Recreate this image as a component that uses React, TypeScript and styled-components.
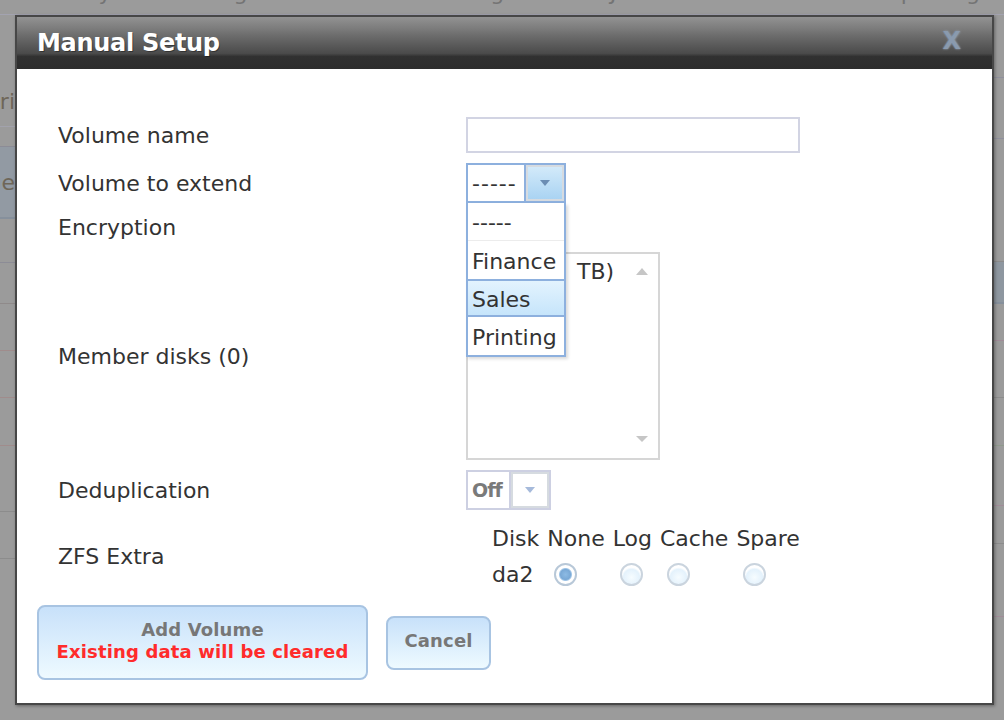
import styled, { createGlobalStyle } from "styled-components";

const GlobalStyle = createGlobalStyle`
  html, body {
    margin: 0;
    padding: 0;
    overflow: hidden;
  }
  body {
    background: #9b9b9b;
    font-family: "DejaVu Sans", Verdana, sans-serif;
  }
`;

const navItems = ["Directory", "Sharing", "Services", "Plugins", "Jails", "VMs", "Reporting"];

const App = () => {
  return (
    <>
      <GlobalStyle />
      <Page>
        <Nav>
          {navItems.map((n) => (
            <NavItem key={n}>{n}</NavItem>
          ))}
        </Nav>
        <Backdrop>
          <Stub>
            <StubRow $h={60} />
            <StubRow $h={50} $line="#a2a2ac">
              <StubText>Periodic Snapshot Tasks Stri</StubText>
            </StubRow>
            <StubRow $h={19} $line="#8c8c96" />
            <StubBox>
              <StubText>Volume Manage</StubText>
            </StubBox>
            <StubRow $h={43} $line="#8c8c96" />
            <StubRow $h={40} $line="#8f8a8a" />
            <StubRow $h={46} $line="#a08c8c" />
            <StubRow $h={46} $line="#a08c8c" />
            <StubRow $h={47} $line="#a08c8c" />
            <StubRow $h={65} $line="#8c8c8c" />
            <StubRow $h={46} $line="#8c8c8c" />
          </Stub>
          <Stub>
            <StubRow $h={62} $line="#8f8f9c" />
            <StubRow $h={60} $line="#8f8f9c" />
            <StubRow $h={122} $line="#8c8c8c" />
            <StubBox $tint="#8e97a0" $h={40} />
            <StubRow $h={36} $line="#a08c98" />
            <StubRow $h={56} $line="#8c8c8c" />
            <StubRow $h={47} $line="#8f9a8c" />
            <StubRow $h={59} $line="#a08c98" />
            <StubRow $h={37} $line="#8c8c8c" />
            <StubRow $h={72} $line="#a08c98" />
          </Stub>
        </Backdrop>

        <Modal>
          <TitleBar>
            <Title>Manual Setup</Title>
            <Close>X</Close>
          </TitleBar>
          <Body>
            <FormGrid>
              <Label>Volume name</Label>
              <TextInput type="text" />

              <Label>Volume to extend</Label>
              <SelectWrap>
                <Select $focused>
                  <SelectValue>-----</SelectValue>
                  <SelectButton $focused>
                    <Arrow $color="#6b8db3" />
                  </SelectButton>
                </Select>
                <Menu>
                  <MenuItem $sep>-----</MenuItem>
                  <MenuItem>Finance</MenuItem>
                  <MenuItem $active>Sales</MenuItem>
                  <MenuItem>Printing</MenuItem>
                </Menu>
              </SelectWrap>

              <Label>Encryption</Label>
              <EmptyCell />

              <Label>Member disks (0)</Label>
              <ListBox>
                <ListItems>
                  <ListItem>da2 (2.0{"\u2002"}TB)</ListItem>
                </ListItems>
                <ScrollCol>
                  <Arrow $color="#c6c6c6" $up $w={13} />
                  <Arrow $color="#c6c6c6" $w={13} />
                </ScrollCol>
              </ListBox>

              <Label>Deduplication</Label>
              <Select $narrow>
                <SelectValue $muted>Off</SelectValue>
                <SelectButton>
                  <Arrow $color="#a6badb" />
                </SelectButton>
              </Select>

              <Label>ZFS Extra</Label>
              <ExtraTable>
                <ExtraHead>Disk</ExtraHead>
                <ExtraHead>None</ExtraHead>
                <ExtraHead>Log</ExtraHead>
                <ExtraHead>Cache</ExtraHead>
                <ExtraHead>Spare</ExtraHead>
                <ExtraCell>da2</ExtraCell>
                <ExtraCell>
                  <Radio $checked />
                </ExtraCell>
                <ExtraCell>
                  <Radio />
                </ExtraCell>
                <ExtraCell>
                  <Radio />
                </ExtraCell>
                <ExtraCell>
                  <Radio />
                </ExtraCell>
              </ExtraTable>
            </FormGrid>

            <Actions>
              <Button $w={331} $h={75}>
                <span>Add Volume</span>
                <Warning>Existing data will be cleared</Warning>
              </Button>
              <Button $w={105} $h={54}>
                Cancel
              </Button>
            </Actions>
          </Body>
        </Modal>
      </Page>
    </>
  );
};

export default App;

const Page = styled.div`
  position: relative;
  width: 1004px;
  height: 720px;
  background: #9b9b9b;
  overflow: hidden;
`;

const Nav = styled.div`
  display: grid;
  grid-template-columns: 153px 137px 157px 153px 150px 113px auto;
  padding-left: 10px;
  margin-top: -28px;
  height: 42px;
  align-items: center;
  border-bottom: 1px solid #a3a3b0;
  font-size: 22px;
  line-height: 26px;
  color: #747474;
  white-space: nowrap;
`;

const NavItem = styled.div``;

const Backdrop = styled.div`
  display: flex;
  justify-content: space-between;
`;

const Stub = styled.div`
  width: 15px;
  display: flex;
  flex-direction: column;
  overflow: hidden;
`;

const StubRow = styled.div<{ $h: number; $line?: string }>`
  height: ${(p) => p.$h}px;
  flex-shrink: 0;
  display: flex;
  align-items: center;
  justify-content: flex-end;
  border-bottom: 1px solid ${(p) => p.$line || "transparent"};
`;

const StubBox = styled.div<{ $tint?: string; $h?: number }>`
  height: ${(p) => p.$h || 70}px;
  flex-shrink: 0;
  display: flex;
  align-items: center;
  justify-content: flex-end;
  background: ${(p) => p.$tint || "#929aa3"};
  border-bottom: 2px solid #86909c;
`;

const StubText = styled.span`
  font-size: 22px;
  color: #6e6658;
  white-space: nowrap;
`;

const Modal = styled.div`
  position: absolute;
  left: 15px;
  top: 15px;
  width: 975px;
  border: 2px solid #474747;
  background: #fff;
  box-shadow: 1px 1px 3px rgba(0, 0, 0, 0.35);
`;

const TitleBar = styled.div`
  height: 52px;
  display: flex;
  align-items: center;
  justify-content: space-between;
  padding: 0 31px 0 20px;
  background: linear-gradient(
    #939393 0%,
    #888888 10%,
    #7c7c7c 22%,
    #6e6e6e 34%,
    #626262 46%,
    #565656 58%,
    #4b4b4b 70%,
    #313131 76%,
    #2d2d2d 100%
  );
`;

const Title = styled.div`
  font-weight: bold;
  font-size: 24px;
  letter-spacing: -0.3px;
  color: #fff;
  text-shadow: 1px 1px 0 rgba(0, 0, 0, 0.35);
`;

const Close = styled.div`
  font-weight: bold;
  font-size: 24px;
  color: #8a9aae;
  margin-top: -5px;
  text-shadow: 0 0 1px #5c6b7c, 0 0 2px #a9b6c6;
`;

const Body = styled.div`
  height: 634px;
  box-sizing: border-box;
  padding: 48px 20px 0;
  display: flex;
  flex-direction: column;
`;

const FormGrid = styled.div`
  display: grid;
  grid-template-columns: 408px 1fr;
  row-gap: 10px;
  padding-left: 21px;
  align-items: center;
  justify-items: start;
`;

const Label = styled.div`
  font-size: 22px;
  color: #333;
`;

const TextInput = styled.input`
  width: 334px;
  height: 36px;
  box-sizing: border-box;
  border: 2px solid #d2d4e3;
  margin: 0;
  outline: none;
  font: 22px "DejaVu Sans", sans-serif;
`;

const SelectWrap = styled.div`
  position: relative;
`;

const Select = styled.div<{ $focused?: boolean; $narrow?: boolean }>`
  display: flex;
  width: ${(p) => (p.$narrow ? 85 : 100)}px;
  height: 40px;
  box-sizing: border-box;
  border: 2px solid ${(p) => (p.$focused ? "#8db0de" : "#cdd0e2")};
  background: #fff;
`;

const SelectValue = styled.div<{ $muted?: boolean }>`
  flex: 1;
  display: flex;
  align-items: center;
  padding-left: 4px;
  font-size: ${(p) => (p.$muted ? 19 : 22)}px;
  font-weight: ${(p) => (p.$muted ? "bold" : "normal")};
  color: ${(p) => (p.$muted ? "#7a7a7a" : "#333")};
  letter-spacing: ${(p) => (p.$muted ? "-1px" : "1px")};
`;

const SelectButton = styled.div<{ $focused?: boolean }>`
  width: 40px;
  box-sizing: border-box;
  border-left: 2px solid ${(p) => (p.$focused ? "#8db0de" : "#cdd0e2")};
  display: flex;
  align-items: center;
  justify-content: center;
  box-shadow: inset 0 0 0 2px #d6dbe0;
  background: ${(p) => (p.$focused ? "linear-gradient(#d5ebfa, #a7d2f2)" : "#fff")};
`;

const Arrow = styled.div<{ $color: string; $up?: boolean; $w?: number }>`
  width: 0;
  height: 0;
  border-left: ${(p) => (p.$w || 11) / 2}px solid transparent;
  border-right: ${(p) => (p.$w || 11) / 2}px solid transparent;
  ${(p) =>
    p.$up
      ? `border-bottom: 7px solid ${p.$color};`
      : `border-top: 6px solid ${p.$color};`}
`;

const Menu = styled.div`
  position: absolute;
  top: 100%;
  left: 0;
  width: 100%;
  box-sizing: border-box;
  border: 2px solid #8db0de;
  border-top: 0;
  background: #fff;
  box-shadow: 2px 2px 3px rgba(0, 0, 0, 0.15);
  z-index: 2;
`;

const MenuItem = styled.div<{ $active?: boolean; $sep?: boolean }>`
  height: 38px;
  box-sizing: border-box;
  display: flex;
  align-items: center;
  padding: 2px 0 0 4px;
  font-size: 22px;
  color: #333;
  border-bottom: ${(p) => (p.$sep ? "1px solid #ececec" : "0")};
  ${(p) =>
    p.$active &&
    `
    background: linear-gradient(#e3f3fe, #c6e5fb);
    border-top: 2px solid #8db0de;
    border-bottom: 2px solid #8db0de;
  `}
`;

const EmptyCell = styled.div`
  height: 29px;
`;

const ListBox = styled.div`
  width: 194px;
  height: 208px;
  box-sizing: border-box;
  border: 2px solid #d6d6d6;
  display: flex;
`;

const ListItems = styled.div`
  flex: 1;
  overflow: hidden;
  padding: 5px 0 0 6px;
`;

const ListItem = styled.div`
  font-size: 22px;
  line-height: 26px;
  color: #333;
  white-space: nowrap;
`;

const ScrollCol = styled.div`
  width: 32px;
  display: flex;
  flex-direction: column;
  align-items: center;
  justify-content: space-between;
  padding: 14px 0 16px;
`;

const ExtraTable = styled.div`
  display: grid;
  grid-template-columns: repeat(5, auto);
  grid-template-rows: 36px 36px;
  column-gap: 8px;
  align-items: center;
  margin-left: 26px;
`;

const ExtraHead = styled.div`
  font-size: 22px;
  color: #333;
`;

const ExtraCell = styled.div`
  font-size: 22px;
  color: #333;
  display: flex;
  align-items: center;
`;

const Radio = styled.span<{ $checked?: boolean }>`
  width: 23px;
  height: 23px;
  box-sizing: border-box;
  margin-left: 7px;
  border-radius: 50%;
  border: 2px solid ${(p) => (p.$checked ? "#b8c8d8" : "#cad4de")};
  background: ${(p) =>
    p.$checked
      ? "radial-gradient(circle, #8dbbe4 0, #7aa9d6 5px, #9fc4e6 6px, #fff 7px)"
      : "radial-gradient(circle at 50% 65%, #f6fcff 0, #e4f2fc 8px, #fff 10px)"};
`;

const Actions = styled.div`
  display: flex;
  align-items: center;
  gap: 18px;
  margin-top: 13px;
`;

const Button = styled.button<{ $w: number; $h: number }>`
  width: ${(p) => p.$w}px;
  height: ${(p) => p.$h}px;
  box-sizing: border-box;
  border: 2px solid #a8c4e2;
  border-radius: 8px;
  background: linear-gradient(#c8e1fa, #eefaff);
  display: flex;
  flex-direction: column;
  align-items: center;
  justify-content: center;
  padding: 0 0 4px;
  font-family: "DejaVu Sans", Verdana, sans-serif;
  font-weight: bold;
  font-size: 18px;
  letter-spacing: 0.15px;
  line-height: 22px;
  color: #777;
`;

const Warning = styled.span`
  color: #ff2b2b;
`;
